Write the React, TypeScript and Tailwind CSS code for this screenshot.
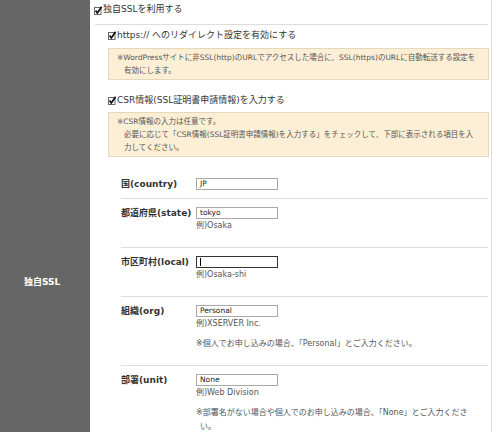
import React from 'react';

function CheckBox() {
  return (
    <svg width="8" height="9" viewBox="0 0 8 9" className="shrink-0">
      <rect x="0.5" y="1.5" width="6.5" height="7" fill="#fff" stroke="#6a6a6a" />
      <path d="M1.6 4.6 L3.3 7 L7.6 0.8" fill="none" stroke="#111" strokeWidth="1.7" />
    </svg>
  );
}

interface RowProps {
  label: string;
  value: string;
  example?: string;
  note?: React.ReactNode;
  focused?: boolean;
  first?: boolean;
}

function FormRow({ label, value, example, note, focused, first }: RowProps) {
  return (
    <div className={`flex ${first ? 'pt-2 pb-2' : 'border-t border-[#dddddd] pt-2 pb-[14px]'}`}>
      <div className="w-[75px] shrink-0 text-[9px] font-bold leading-[12px] text-[#333]">{label}</div>
      <div className="flex flex-col">
        <div
          className={`flex h-[12px] w-[82px] items-center border px-[3px] text-[7.5px] leading-[10px] text-[#222] ${
            focused ? 'border-[#333]' : 'border-[#a9a9a9]'
          }`}
        >
          {focused ? <span className="h-[8px] w-px bg-black" /> : value}
        </div>
        {example && <div className="text-[8px] leading-[14px] text-[#555]">{example}</div>}
        {note && <div className="mt-[6px] whitespace-nowrap text-[8px] leading-[14px] text-[#555]">{note}</div>}
      </div>
    </div>
  );
}

export default function App() {
  return (
    <div className="flex h-[432px] w-[501px] overflow-hidden bg-white font-['DejaVu_Sans','Noto_Sans_CJK_JP',sans-serif] text-[#333]">
      {/* header cell */}
      <div className="w-[90px] shrink-0 bg-[#666666] pl-[24px] pt-[275px]">
        <div className="text-[9px] font-bold leading-[14px] text-white">独自SSL</div>
      </div>

      {/* content cell */}
      <div className="w-[402px] shrink-0 border-r border-[#dddddd] pl-[4px] pr-[2px]">
        <div className="flex h-[20px] items-center text-[9px]">
          <CheckBox />
          <span className="ml-px">独自SSLを利用する</span>
        </div>
        <div className="mx-px mt-[4px] h-px bg-[#dddddd]" />

        <div className="ml-[14px]">
          <div className="mt-[4px] flex h-[13px] items-center text-[9px]">
            <CheckBox />
            <span className="ml-px">https:// へのリダイレクト設定を有効にする</span>
          </div>
          <div className="mt-[6px] border border-[#e4d8bf] bg-[#fdefd5] py-[2px] pl-[15px] pr-2 text-[7.5px] leading-[13px] text-[#555] whitespace-nowrap">
            <div className="-indent-[7px]">※WordPressサイトに非SSL(http)のURLでアクセスした場合に、SSL(https)のURLに自動転送する設定を</div>
            <div>有効にします。</div>
          </div>

          <div className="mt-[14px] flex h-[13px] items-center text-[9px]">
            <CheckBox />
            <span className="ml-px">CSR情報(SSL証明書申請情報)を入力する</span>
          </div>
          <div className="mt-[5px] border border-[#e4d8bf] bg-[#fdefd5] py-[2px] pl-[15px] pr-2 text-[7.5px] leading-[13px] text-[#555] whitespace-nowrap">
            <div className="-indent-[7px]">※CSR情報の入力は任意です。</div>
            <div>必要に応じて「CSR情報(SSL証明書申請情報)を入力する」をチェックして、下部に表示される項目を入</div>
            <div>力してください。</div>
          </div>
        </div>

        <div className="ml-[27px] mr-px mt-[13px]">
          <FormRow first label="国(country)" value="JP" />
          <FormRow label="都道府県(state)" value="tokyo" example="例)Osaka" />
          <FormRow label="市区町村(local)" value="" focused example="例)Osaka-shi" />
          <FormRow
            label="組織(org)"
            value="Personal"
            example="例)XSERVER Inc."
            note="※個人でお申し込みの場合、「Personal」とご入力ください。"
          />
          <FormRow
            label="部署(unit)"
            value="None"
            example="例)Web Division"
            note={
              <>
                <div>※部署名がない場合や個人でのお申し込みの場合、「None」とご入力くださ</div>
                <div className="pl-[4px]">い。</div>
              </>
            }
          />
        </div>
      </div>
    </div>
  );
}
